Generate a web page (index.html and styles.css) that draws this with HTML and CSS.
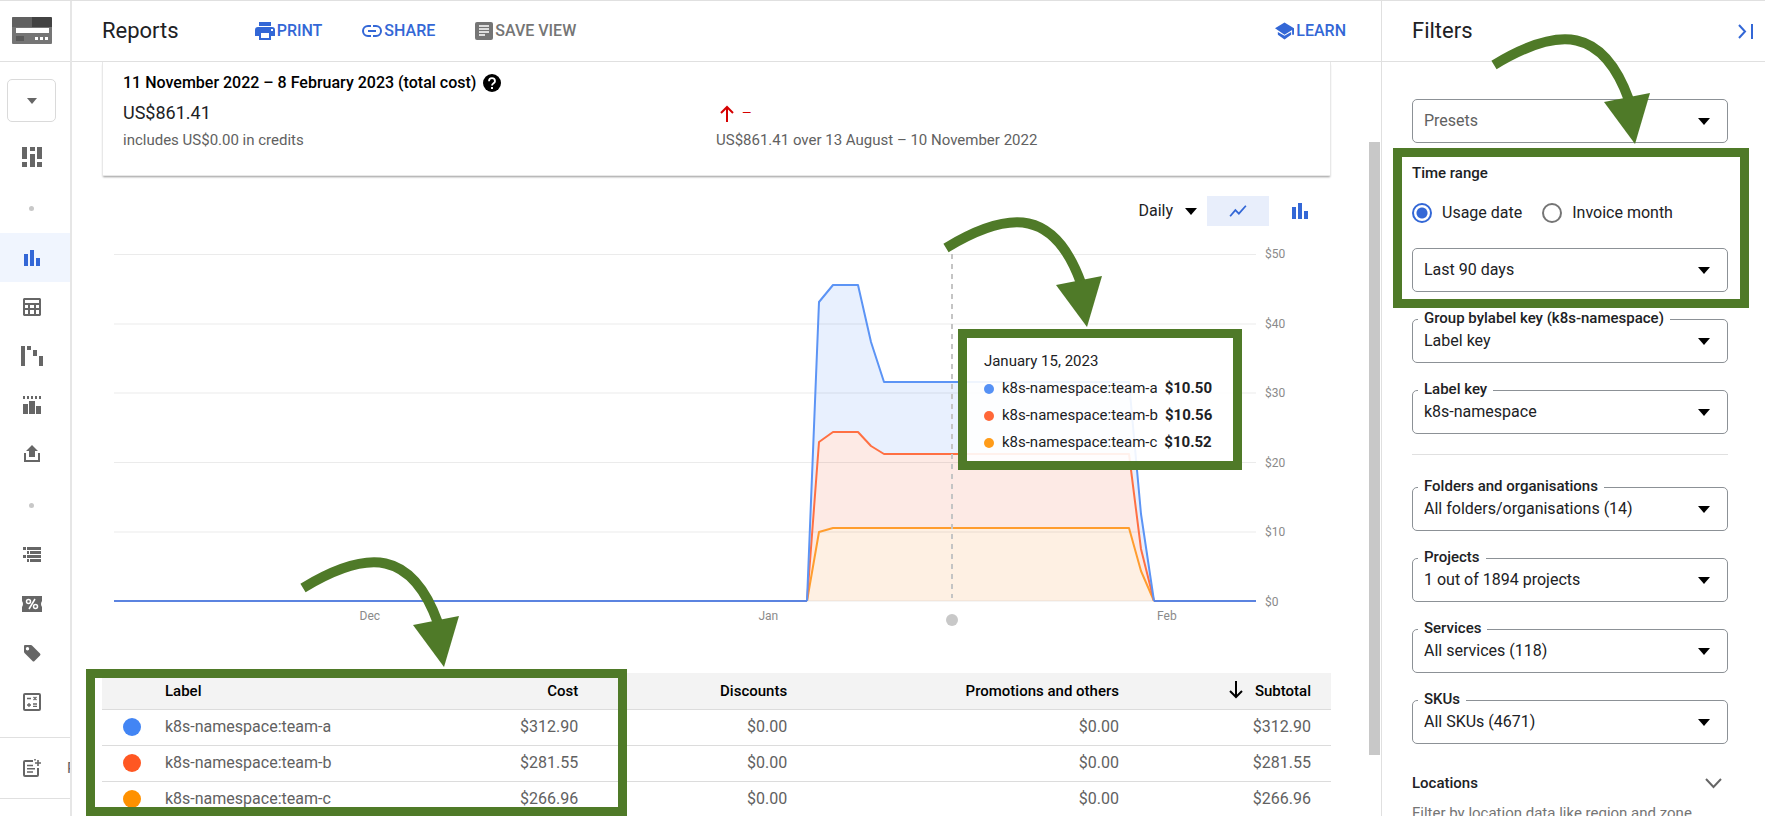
FILE: index.html
```html
<!DOCTYPE html>
<html lang="en-GB">
<head>
<meta charset="utf-8">
<title>Reports</title>
<link rel="stylesheet" href="styles.css">
</head>
<body>
<svg class="defs" width="0" height="0" aria-hidden="true">
  <symbol id="caret" viewBox="0 0 12 7"><path d="M0 0h12L6 7z"/></symbol>
  <symbol id="bars" viewBox="0 0 18 18"><path d="M1 5h4v12H1zM7 1h4v16H7zM13 9h4v8h-4z"/></symbol>
  <symbol id="arrow" viewBox="0 0 164 112">
    <path d="M5 31C71-9 114-6 140 66" fill="none" stroke="#4f7a28" stroke-width="10"/>
    <path d="M115 68l46-9-15 51z" fill="#4f7a28"/>
  </symbol>
</svg>
<div class="app">
  <nav class="rail" aria-label="Billing">
    <a class="brand" href="#" aria-label="Billing">
      <svg width="40" height="27" viewBox="0 0 40 27"><rect width="40" height="27" rx="1" fill="#757575"/><path d="M1 0h19v10H0V1z" fill="#616161"/><path d="M20 0h19l1 1v9H20z" fill="#424242"/><rect x="4" y="11" width="33" height="5" fill="#fff"/><rect x="4" y="19" width="8" height="5" fill="#5a5a5a"/><path d="M23 20h3v3h-3zM28 20h3v3h-3zM33 20h3v3h-3z" fill="#fff"/></svg>
    </a>
    <button class="picker" type="button" aria-label="Billing account"><svg width="10" height="6"><use href="#caret"/></svg></button>
    <a class="item" href="#" aria-label="Overview"><svg width="20" height="20" viewBox="0 0 20 20"><path d="M0 0h5v12H0zM0 15h5v5H0zM8 0h5v4H8zM8 7h5v13H8zM15 0h5v12h-5zM15 15h5v5h-5z"/></svg></a>
    <span class="dot"></span>
    <a class="item current" href="#" aria-label="Reports"><svg width="18" height="18"><use href="#bars"/></svg></a>
    <a class="item" href="#" aria-label="Cost table"><svg width="18" height="18" viewBox="0 0 18 18"><path fill-rule="evenodd" d="M1 0h16l1 1v16l-1 1H1l-1-1V1zM2 2v3h14V2zM2 7v3h3V7zM7 7v3h4V7zM13 7v3h3V7zM2 12v4h3v-4zM7 12v4h4v-4zM13 12v4h3v-4z"/></svg></a>
    <a class="item" href="#" aria-label="Cost breakdown"><svg width="22" height="20" viewBox="0 0 22 20"><path d="M0 0h4v20H0zM6 0h4v4H6zM12 4h4v6h-4zM18 10h4v10h-4z"/></svg></a>
    <a class="item" href="#" aria-label="Budgets"><svg width="18" height="18" viewBox="0 0 18 18"><path d="M0 8h5v10H0zM6 5h6v13H6zM13 10h5v8h-5zM0 0h2v3H0zM4 0h2v3H4zM8 0h2v3H8zM12 0h2v3h-2zM16 0h2v3h-2z"/></svg></a>
    <a class="item" href="#" aria-label="Billing export"><svg width="16" height="17" viewBox="0 0 16 17"><path d="M8 0l6 6h-3v6H5V6H2zM0 8h2v7h12V8h2v9H0z"/></svg></a>
    <span class="dot"></span>
    <a class="item" href="#" aria-label="Pricing"><svg width="18" height="15" viewBox="0 0 18 15"><path d="M0 0h3v3H0zM4 0h14v3H4zM4 4h2v3H4zM7 4h11v3H7zM0 8h3v3H0zM4 8h14v3H4zM4 12h2v3H4zM7 12h11v3H7z"/></svg></a>
    <a class="item" href="#" aria-label="Commitments"><svg width="20" height="16" viewBox="0 0 20 16"><path d="M0 0h20v5q-2 3 0 6v5H0v-5q2-3 0-6z"/><g fill="none" stroke="#fff" stroke-width="1.5"><circle cx="6.500" cy="5.500" r="2"/><circle cx="13.500" cy="10.500" r="2"/><path d="M13 3L7 13"/></g></svg></a>
    <a class="item" href="#" aria-label="Tags"><svg width="18" height="18" viewBox="0 0 18 18"><path fill-rule="evenodd" d="M2 1h6l1 .5 8 8q1 1 0 2l-5.500 5.500q-1 1-2 0l-8-8L1 8V2q0-1 1-1zM4.500 3a1.700 1.700 0 100 3.400 1.700 1.700 0 000-3.400z"/></svg></a>
    <a class="item" href="#" aria-label="Cost estimation"><svg width="18" height="18" viewBox="0 0 18 18" fill="none" stroke="#666" stroke-width="2"><rect x="1" y="1" width="16" height="16" rx="1"/><path stroke-width="1.300" d="M4 5.500h4M4 12h4M6 10v4M10 11h4M10 13.300h4M10.500 4l3 3M13.500 4l-3 3"/></svg></a>
    <a class="notes" href="#"><svg width="18" height="18" viewBox="0 0 18 18" fill="none" stroke="#666" stroke-width="2"><path d="M10 2H2q-1 0-1 1v13q0 1 1 1h12q1 0 1-1V9"/><path stroke-width="1.600" d="M4 6.500h6M4 9.700h8M4 13h6M15 1v6M12 4h6M12 0v1.500"/></svg><span>Release notes</span></a>
  </nav>

  <header class="toolbar">
    <h1>Reports</h1>
    <div class="actions">
      <button type="button"><svg width="20" height="18" viewBox="0 0 20 18"><path fill-rule="evenodd" d="M4 0h12v4H4zM3 5h14q3 0 3 3v6h-4v4H4v-4H0V8q0-3 3-3zM6 11v5h8v-5zM16 7v2h2V7z"/></svg>PRINT</button>
      <button type="button"><svg width="20" height="14" viewBox="0 0 20 14" fill="none" stroke="currentColor" stroke-width="2"><path d="M9 2H6a5 5 0 000 10h3M11 2h3a5 5 0 010 10h-3M6 7h8"/></svg>SHARE</button>
      <button type="button" class="off"><svg width="18" height="18" viewBox="0 0 18 18"><rect width="18" height="18" rx="2"/><path d="M4 4h10M4 7h10M4 10h10M4 13h6" stroke="#ddd" stroke-width="1.800"/></svg>SAVE VIEW</button>
    </div>
    <button type="button" class="learn"><svg width="19" height="18" viewBox="0 0 20 18"><path d="M10 0l10 6v7h-2V8l-8 5L0 6zM3 10l7 4 7-4v3l-7 5-7-5z"/></svg>LEARN</button>
  </header>

  <main class="report">
    <section class="summary">
      <div>
        <h2>11 November 2022 – 8 February 2023 (total cost)
          <svg width="18" height="18" viewBox="0 0 18 18"><circle cx="9" cy="9" r="9"/><path d="M6 7.200a3 3 0 116 0c0 2-3 2-3 4.300" fill="none" stroke="#fff" stroke-width="1.800"/><rect x="8" y="13" width="2" height="2" fill="#fff"/></svg></h2>
        <p class="amount">US$861.41</p>
        <p>includes US$0.00 in credits</p>
      </div>
      <div class="trend">
        <p class="amount up"><svg width="16" height="17" viewBox="0 0 16 17" fill="none" stroke="#d50000" stroke-width="2"><path d="M8 17V2M2 8l6-6 6 6"/></svg><span>—</span></p>
        <p>US$861.41 over 13 August – 10 November 2022</p>
      </div>
    </section>

    <div class="controls">
      <button type="button" class="daily">Daily <svg width="12" height="7"><use href="#caret"/></svg></button>
      <button type="button" class="view on" aria-label="Line chart"><svg width="18" height="14" viewBox="0 0 20 16" fill="none" stroke="currentColor" stroke-width="2"><path d="M1 14l6-7 4 4 8-9"/></svg></button>
      <button type="button" class="view" aria-label="Bar chart"><svg width="18" height="18"><use href="#bars"/></svg></button>
    </div>

    <section class="chart" aria-label="Daily cost">
      <div class="plot">
        <svg class="series" viewBox="0 0 1142 348" preserveAspectRatio="none">
          <path fill="#e8f0fe" d="M693 347L705 48 719 31H744L757 88 770 128H1015L1027 260 1040 347z"/>
          <path fill="#fdeae5" d="M693 347L705 188 719 178H744L757 192 770 200H1015L1027 295 1040 347z"/>
          <path fill="#fef0e3" d="M693 347L705 278 719 274H1015L1027 317 1040 347z"/>
          <path class="grid" d="M0 .5H1142M0 70H1142M0 139H1142M0 208.500H1142M0 278H1142M0 347H1142"/>
          <path class="line" stroke="#ff9d2e" d="M693 347L705 278 719 274H1015L1027 317 1040 347"/>
          <path class="line" stroke="#ff7043" d="M693 347L705 188 719 178H744L757 192 770 200H1015L1027 295 1040 347"/>
          <path class="line" stroke="#5c94f5" d="M693 347L705 48 719 31H744L757 88 770 128H1015L1027 260 1040 347"/>
          <path class="line" stroke="#5b83e0" d="M0 347H693M1040 347H1142"/>
          <path class="cursor" d="M838 0V344"/>
        </svg>
        <span class="knob"></span>
        <span class="month dec">Dec</span><span class="month jan">Jan</span><span class="month feb">Feb</span>
        <div class="tip" role="tooltip">
          <div>January 15, 2023</div>
          <div class="row"><i class="blue"></i>k8s-namespace:team-a<b>$10.50</b></div>
          <div class="row"><i class="red"></i>k8s-namespace:team-b<b>$10.56</b></div>
          <div class="row"><i class="orange"></i>k8s-namespace:team-c<b>$10.52</b></div>
        </div>
        <svg class="arrow to-tip"><use href="#arrow"/></svg>
      </div>
      <div class="scale"><span>$50</span><span>$40</span><span>$30</span><span>$20</span><span>$10</span><span>$0</span></div>
    </section>

    <section class="costs">
      <table>
        <colgroup><col class="c-dot"><col><col class="c-cost"><col class="c-disc"><col class="c-promo"><col class="c-sub"></colgroup>
        <thead><tr><th></th><th class="name">Label</th><th>Cost</th><th>Discounts</th><th>Promotions and others</th><th><svg width="16" height="18" viewBox="0 0 16 18" fill="none" stroke="#000" stroke-width="2"><path d="M8 0v16M2 10l6 6 6-6"/></svg>Subtotal</th></tr></thead>
        <tbody>
          <tr><td class="mark"><i class="blue"></i></td><td class="name">k8s-namespace:team-a</td><td>$312.90</td><td>$0.00</td><td>$0.00</td><td>$312.90</td></tr>
          <tr><td class="mark"><i class="red"></i></td><td class="name">k8s-namespace:team-b</td><td>$281.55</td><td>$0.00</td><td>$0.00</td><td>$281.55</td></tr>
          <tr><td class="mark"><i class="orange"></i></td><td class="name">k8s-namespace:team-c</td><td>$266.96</td><td>$0.00</td><td>$0.00</td><td>$266.96</td></tr>
        </tbody>
      </table>
      <div class="frame"></div>
      <svg class="arrow to-costs"><use href="#arrow"/></svg>
    </section>
    <span class="thumb"></span>
  </main>

  <header class="filters-head">
    <h2>Filters</h2>
    <button type="button" aria-label="Collapse filters"><svg width="16" height="15" viewBox="0 0 16 15" fill="none" stroke="currentColor" stroke-width="2"><path d="M1 1l6 6.500L1 14M14 0v15"/></svg></button>
  </header>

  <aside class="filters">
    <div class="field presets"><select class="empty" aria-label="Presets"><option>Presets</option></select><svg width="12" height="7"><use href="#caret"/></svg></div>

    <div class="range" role="radiogroup" aria-labelledby="range-title">
      <h3 id="range-title">Time range</h3>
      <div class="radios">
        <label><input type="radio" name="range" checked>Usage date</label>
        <label><input type="radio" name="range">Invoice month</label>
      </div>
      <div class="field"><select aria-label="Period"><option>Last 90 days</option></select><svg width="12" height="7"><use href="#caret"/></svg></div>
      <svg class="arrow to-range"><use href="#arrow"/></svg>
    </div>

    <div class="group">
      <div class="field"><label for="group">Group bylabel key (k8s-namespace)</label><select id="group"><option>Label key</option></select><svg width="12" height="7"><use href="#caret"/></svg></div>
      <div class="field"><label for="key">Label key</label><select id="key"><option>k8s-namespace</option></select><svg width="12" height="7"><use href="#caret"/></svg></div>
    </div>
    <hr>
    <div class="group scope">
      <div class="field"><label for="folders">Folders and organisations</label><select id="folders"><option>All folders/organisations (14)</option></select><svg width="12" height="7"><use href="#caret"/></svg></div>
      <div class="field"><label for="projects">Projects</label><select id="projects"><option>1 out of 1894 projects</option></select><svg width="12" height="7"><use href="#caret"/></svg></div>
      <div class="field"><label for="services">Services</label><select id="services"><option>All services (118)</option></select><svg width="12" height="7"><use href="#caret"/></svg></div>
      <div class="field"><label for="skus">SKUs</label><select id="skus"><option>All SKUs (4671)</option></select><svg width="12" height="7"><use href="#caret"/></svg></div>
    </div>
    <button type="button" class="locations">Locations <svg width="17" height="11" viewBox="0 0 17 11" fill="none" stroke="#666" stroke-width="2"><path d="M1 1l7.500 8L16 1"/></svg></button>
    <p class="hint">Filter by location data like region and zone</p>
  </aside>
</div>
</body>
</html>
```
FILE: styles.css
```css
* { box-sizing: border-box; }
body {
  margin: 0;
  color: #202124;
  background: #fff;
  font: 15px/20px Roboto, "Liberation Sans", sans-serif;
}
h1, h2, h3, p { margin: 0; font-weight: 400; }
button {
  padding: 0;
  border: 0;
  background: none;
  color: inherit;
  font: inherit;
}
.defs { position: absolute; }
.app {
  display: grid;
  grid-template: 61px minmax(0, 1fr) / 72px minmax(0, 1fr) 384px;
  height: calc(100vh - 4px);
  overflow: hidden;
  border-top: 1px solid #e0e0e0;
}
i { display: inline-block; border-radius: 50%; }
.blue { background: #4285f4; }
.red { background: #ff5722; }
.orange { background: #ff9100; }
.arrow { position: absolute; width: 164px; height: 112px; z-index: 3; pointer-events: none; }

/* Left rail */
.rail {
  grid-row: 1 / 3;
  display: flex;
  flex-direction: column;
  overflow: hidden;
  border-right: 2px solid #e6e6e6;
  fill: #666;
}
.brand {
  display: flex;
  flex: 0 0 61px;
  padding: 16px 0 0 12px;
  border-bottom: 1px solid #e0e0e0;
}
.picker {
  display: flex;
  flex: 0 0 43px;
  align-items: center;
  justify-content: center;
  margin: 17px 14px 10px 7px;
  border: 1px solid #dadada;
  border-radius: 5px;
}
.item {
  display: flex;
  flex: 0 0 49px;
  align-items: center;
  justify-content: center;
  padding-right: 6px;
}
.current { background: #f0f5fe; fill: #3367d6; }
.dot {
  display: flex;
  flex: 0 0 52px;
  align-items: center;
  padding: 3px 0 0 29px;
}
.dot::before { content: ""; width: 5px; height: 5px; border-radius: 50%; background: #c8c8c8; }
.notes {
  display: flex;
  flex: 0 0 62px;
  gap: 26px;
  align-items: center;
  margin-top: 11px;
  padding-left: 23px;
  border: solid #e0e0e0;
  border-width: 1px 0;
  color: #666;
  text-decoration: none;
  white-space: nowrap;
}
.notes svg { flex: none; }

/* Top bars */
.toolbar, .filters-head {
  display: flex;
  align-items: center;
  border-bottom: 1px solid #e0e0e0;
}
.toolbar { padding: 0 35px 0 30px; }
.toolbar h1, .filters-head h2 { font-size: 22px; line-height: 28px; }
.actions { display: flex; gap: 40px; margin-left: 76px; }
.toolbar button {
  display: flex;
  gap: 2px;
  align-items: center;
  color: #3367d6;
  fill: #3367d6;
  font-size: 16px;
  font-weight: 500;
}
.toolbar .off { color: #757575; fill: #757575; }
.toolbar .learn { margin-left: auto; }
.filters-head {
  justify-content: space-between;
  padding: 0 11px 0 30px;
  border-left: 1px solid #e0e0e0;
}
.filters-head button { display: flex; color: #3367d6; }

/* Report */
.report {
  position: relative;
  grid-area: 2 / 2;
  display: flex;
  flex-direction: column;
  min-height: 0;
  padding: 0 50px 0 30px;
}
.summary {
  display: grid;
  flex: 0 0 114px;
  grid-template-columns: 593px 1fr;
  padding: 11px 20px 0;
  border: 1px solid #e8e8e8;
  border-top: 0;
  box-shadow: 0 2px 2px -1px #999;
  color: #616161;
}
.summary h2 {
  display: flex;
  gap: 7px;
  align-items: center;
  color: #000;
  font-size: 16px;
  font-weight: 500;
}
.amount { padding: 8px 0 5px; color: #202124; font-size: 18px; line-height: 24px; }
.trend { padding-top: 20px; }
.up { display: flex; gap: 7px; align-items: center; padding-left: 3px; color: #d50000; }
.up span { font-size: 12px; }
.controls { display: flex; align-items: center; justify-content: flex-end; margin-top: 20px; }
.daily { display: flex; gap: 12px; align-items: center; margin-right: 10px; font-size: 16px; }
.view {
  display: flex;
  align-items: center;
  justify-content: center;
  width: 62px;
  height: 30px;
  color: #3367d6;
  fill: #3367d6;
}
.on { background: #e8eefb; }

.chart { display: flex; flex: none; margin: 28px 0 0 12px; }
.plot { position: relative; flex: 1; min-width: 0; height: 348px; }
.series { display: block; width: 100%; height: 100%; overflow: visible; }
.series path { vector-effect: non-scaling-stroke; }
.grid { stroke: #000; stroke-opacity: .08; }
.line { fill: none; stroke-width: 2; stroke-linejoin: round; }
.cursor { stroke: #c4c4c4; stroke-width: 2; stroke-dasharray: 5 5; }
.scale {
  display: flex;
  flex-direction: column;
  flex: 0 0 75px;
  justify-content: space-between;
  margin: -8px 0;
  padding-left: 9px;
  color: #8a8a8a;
  font-size: 12px;
  line-height: 16px;
}
.knob, .month { position: absolute; transform: translateX(-50%); }
.knob { left: 73.4%; top: 360px; width: 12px; height: 12px; border-radius: 50%; background: #c8c8c8; }
.month { top: 354px; color: #8a8a8a; font-size: 12px; line-height: 16px; }
.dec { left: 22.4%; }
.jan { left: 57.3%; }
.feb { left: 92.2%; }
.tip {
  position: absolute;
  left: 73.9%;
  top: 75px;
  width: 284px;
  padding: 10px 17px 5px;
  border: 9px solid #4f7a28;
  background: rgba(255, 255, 255, .9);
  background-clip: padding-box;
  line-height: 27px;
  white-space: nowrap;
}
.row { display: flex; align-items: center; }
.row i { width: 10px; height: 10px; margin-right: 8px; opacity: .9; }
.row b { margin-left: 7px; }
.to-tip { left: 72.4%; top: -37px; }

.costs { position: relative; flex: 1; min-height: 0; margin-top: 71px; }
table { width: 100%; border-collapse: collapse; table-layout: fixed; color: #616161; }
th, td {
  height: 36px;
  padding: 0 20px 0 0;
  border-bottom: 1px solid #dcdcdc;
  text-align: right;
  font-size: 16px;
  white-space: nowrap;
}
thead { background: #f3f3f3; color: #000; }
th { font-size: 15px; font-weight: 500; }
th svg { margin-right: 11px; vertical-align: -3px; }
.name { text-align: left; }
.mark { padding: 0 0 0 21px; text-align: left; }
.mark i { display: block; width: 18px; height: 18px; }
.c-dot { width: 63px; }
.c-cost { width: 12%; }
.c-disc { width: 17%; }
.c-promo { width: 27%; }
.c-sub { width: 192px; }
.frame {
  position: absolute;
  top: -4px;
  bottom: 0;
  left: -16px;
  width: 44%;
  border: 9px solid #4f7a28;
}
.to-costs { left: 196px; top: -116px; }
.thumb { position: absolute; top: 80px; right: 1px; width: 11px; height: 613px; background: #c8c8c8; }

/* Filters */
.filters-head { grid-area: 1 / 3; }
.filters {
  grid-area: 2 / 3;
  min-height: 0;
  padding: 37px 37px 0 30px;
  border-left: 1px solid #e0e0e0;
}
.field { position: relative; }
.field select {
  display: block;
  width: 100%;
  height: 44px;
  padding: 0 11px;
  border: 1px solid #8c9196;
  border-radius: 5px;
  appearance: none;
  background: #fff;
  color: #202124;
  font: 16px/20px Roboto, "Liberation Sans", sans-serif;
}
.field .empty { color: #616161; }
.field > svg { position: absolute; top: 19px; right: 18px; pointer-events: none; }
.field label {
  position: absolute;
  top: -11px;
  left: 6px;
  padding: 0 6px;
  background: #fff;
  font-weight: 500;
}
.range {
  position: relative;
  margin-top: 20px;
}
.range::after {
  content: "";
  position: absolute;
  inset: -15px -21px -16px -19px;
  border: 9px solid #4f7a28;
  pointer-events: none;
}
.range h3 { font-size: 15px; font-weight: 500; }
.radios { display: flex; gap: 20px; margin: 20px 0 25px; }
.radios label { display: flex; gap: 10px; align-items: center; font-size: 16px; }
.radios input {
  width: 20px;
  height: 20px;
  margin: 0;
  border: 2px solid #757575;
  border-radius: 50%;
  appearance: none;
}
.radios input:checked {
  border-color: #3367d6;
  background: radial-gradient(circle, #3367d6 5px, #fff 6px);
}
.to-range { left: 77px; top: -129px; }
.group { display: grid; gap: 27px; margin-top: 27px; }
hr { margin: 20px 0 0; border: 0; border-top: 1px solid #e0e0e0; }
.scope { margin-top: 32px; }
.locations {
  display: flex;
  align-items: center;
  justify-content: space-between;
  width: 100%;
  margin-top: 29px;
  padding-right: 6px;
  font-weight: 500;
}
.hint { margin-top: 10px; color: #757575; white-space: nowrap; }
```
